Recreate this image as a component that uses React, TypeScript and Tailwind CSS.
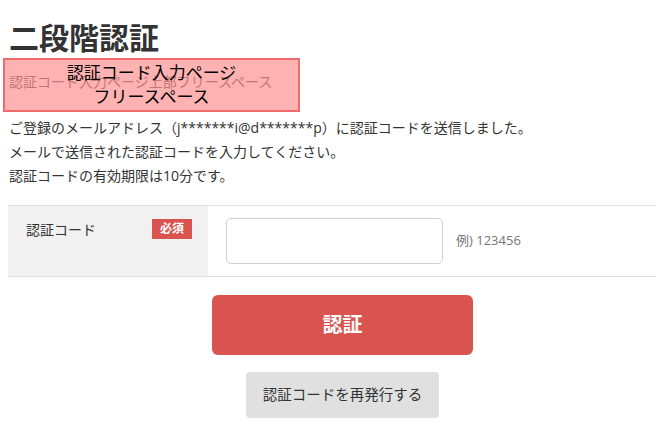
export default function App() {
  return (
    <div
      className="relative w-[656px] h-[430px] overflow-hidden bg-white text-[#333]"
      style={{ fontFamily: '"Open Sans", "Noto Sans CJK JP", sans-serif' }}
    >
      <div className="pl-[9px]">
        <h1 className="pt-[18px] text-[30px] font-bold leading-[40px] text-[#333]">二段階認証</h1>
        <p className="mt-[12px] text-[14px] leading-[24px] text-[#aaa]">認証コード入力ページ上部フリースペース</p>
        <div className="mt-[22px] text-[14px] leading-[24px] text-[#333]">
          <p>ご登録のメールアドレス（j*******i@d*******p）に認証コードを送信しました。</p>
          <p>メールで送信された認証コードを入力してください。</p>
          <p>認証コードの有効期限は10分です。</p>
        </div>
      </div>

      <div className="mt-[17px] ml-[8px] flex border-y border-[#dedede] w-[700px]">
        <div className="w-[200px] bg-[#f1f1f1] flex items-start justify-between pl-[18px] pr-[16px] pt-[12px]">
          <span className="text-[14px] leading-[24px] text-[#333]">認証コード</span>
          <span className="w-[40px] h-[20px] mt-[1px] bg-[#d9534f] text-white text-[12px] font-bold leading-[20px] text-center">必須</span>
        </div>
        <div className="flex items-center py-[12px] pl-[18px]">
          <input
            type="text"
            className="w-[217px] h-[46px] rounded-[5px] border border-[#cfcfcf] bg-white outline-none"
          />
          <span className="ml-[13px] text-[13px] text-[#777]">例) 123456</span>
        </div>
      </div>

      <div className="ml-[212px] w-[261px] flex flex-col items-center">
        <button className="mt-[18px] w-[261px] h-[60px] rounded-[6px] bg-[#d9534f] text-white text-[20px] font-bold">
          認証
        </button>
        <button className="mt-[17px] w-[193px] h-[46px] rounded-[4px] bg-[#e0e0e0] text-[#333] text-[14.5px]">
          認証コードを再発行する
        </button>
      </div>

      <div className="absolute left-[3px] top-[58px] w-[297px] h-[54px] border-2 border-[#f06b6b] bg-[rgba(255,0,0,0.3)] flex flex-col items-center justify-center text-[17px] leading-[24px] text-black">
        <span>認証コード入力ページ</span>
        <span>フリースペース</span>
      </div>
    </div>
  );
}
